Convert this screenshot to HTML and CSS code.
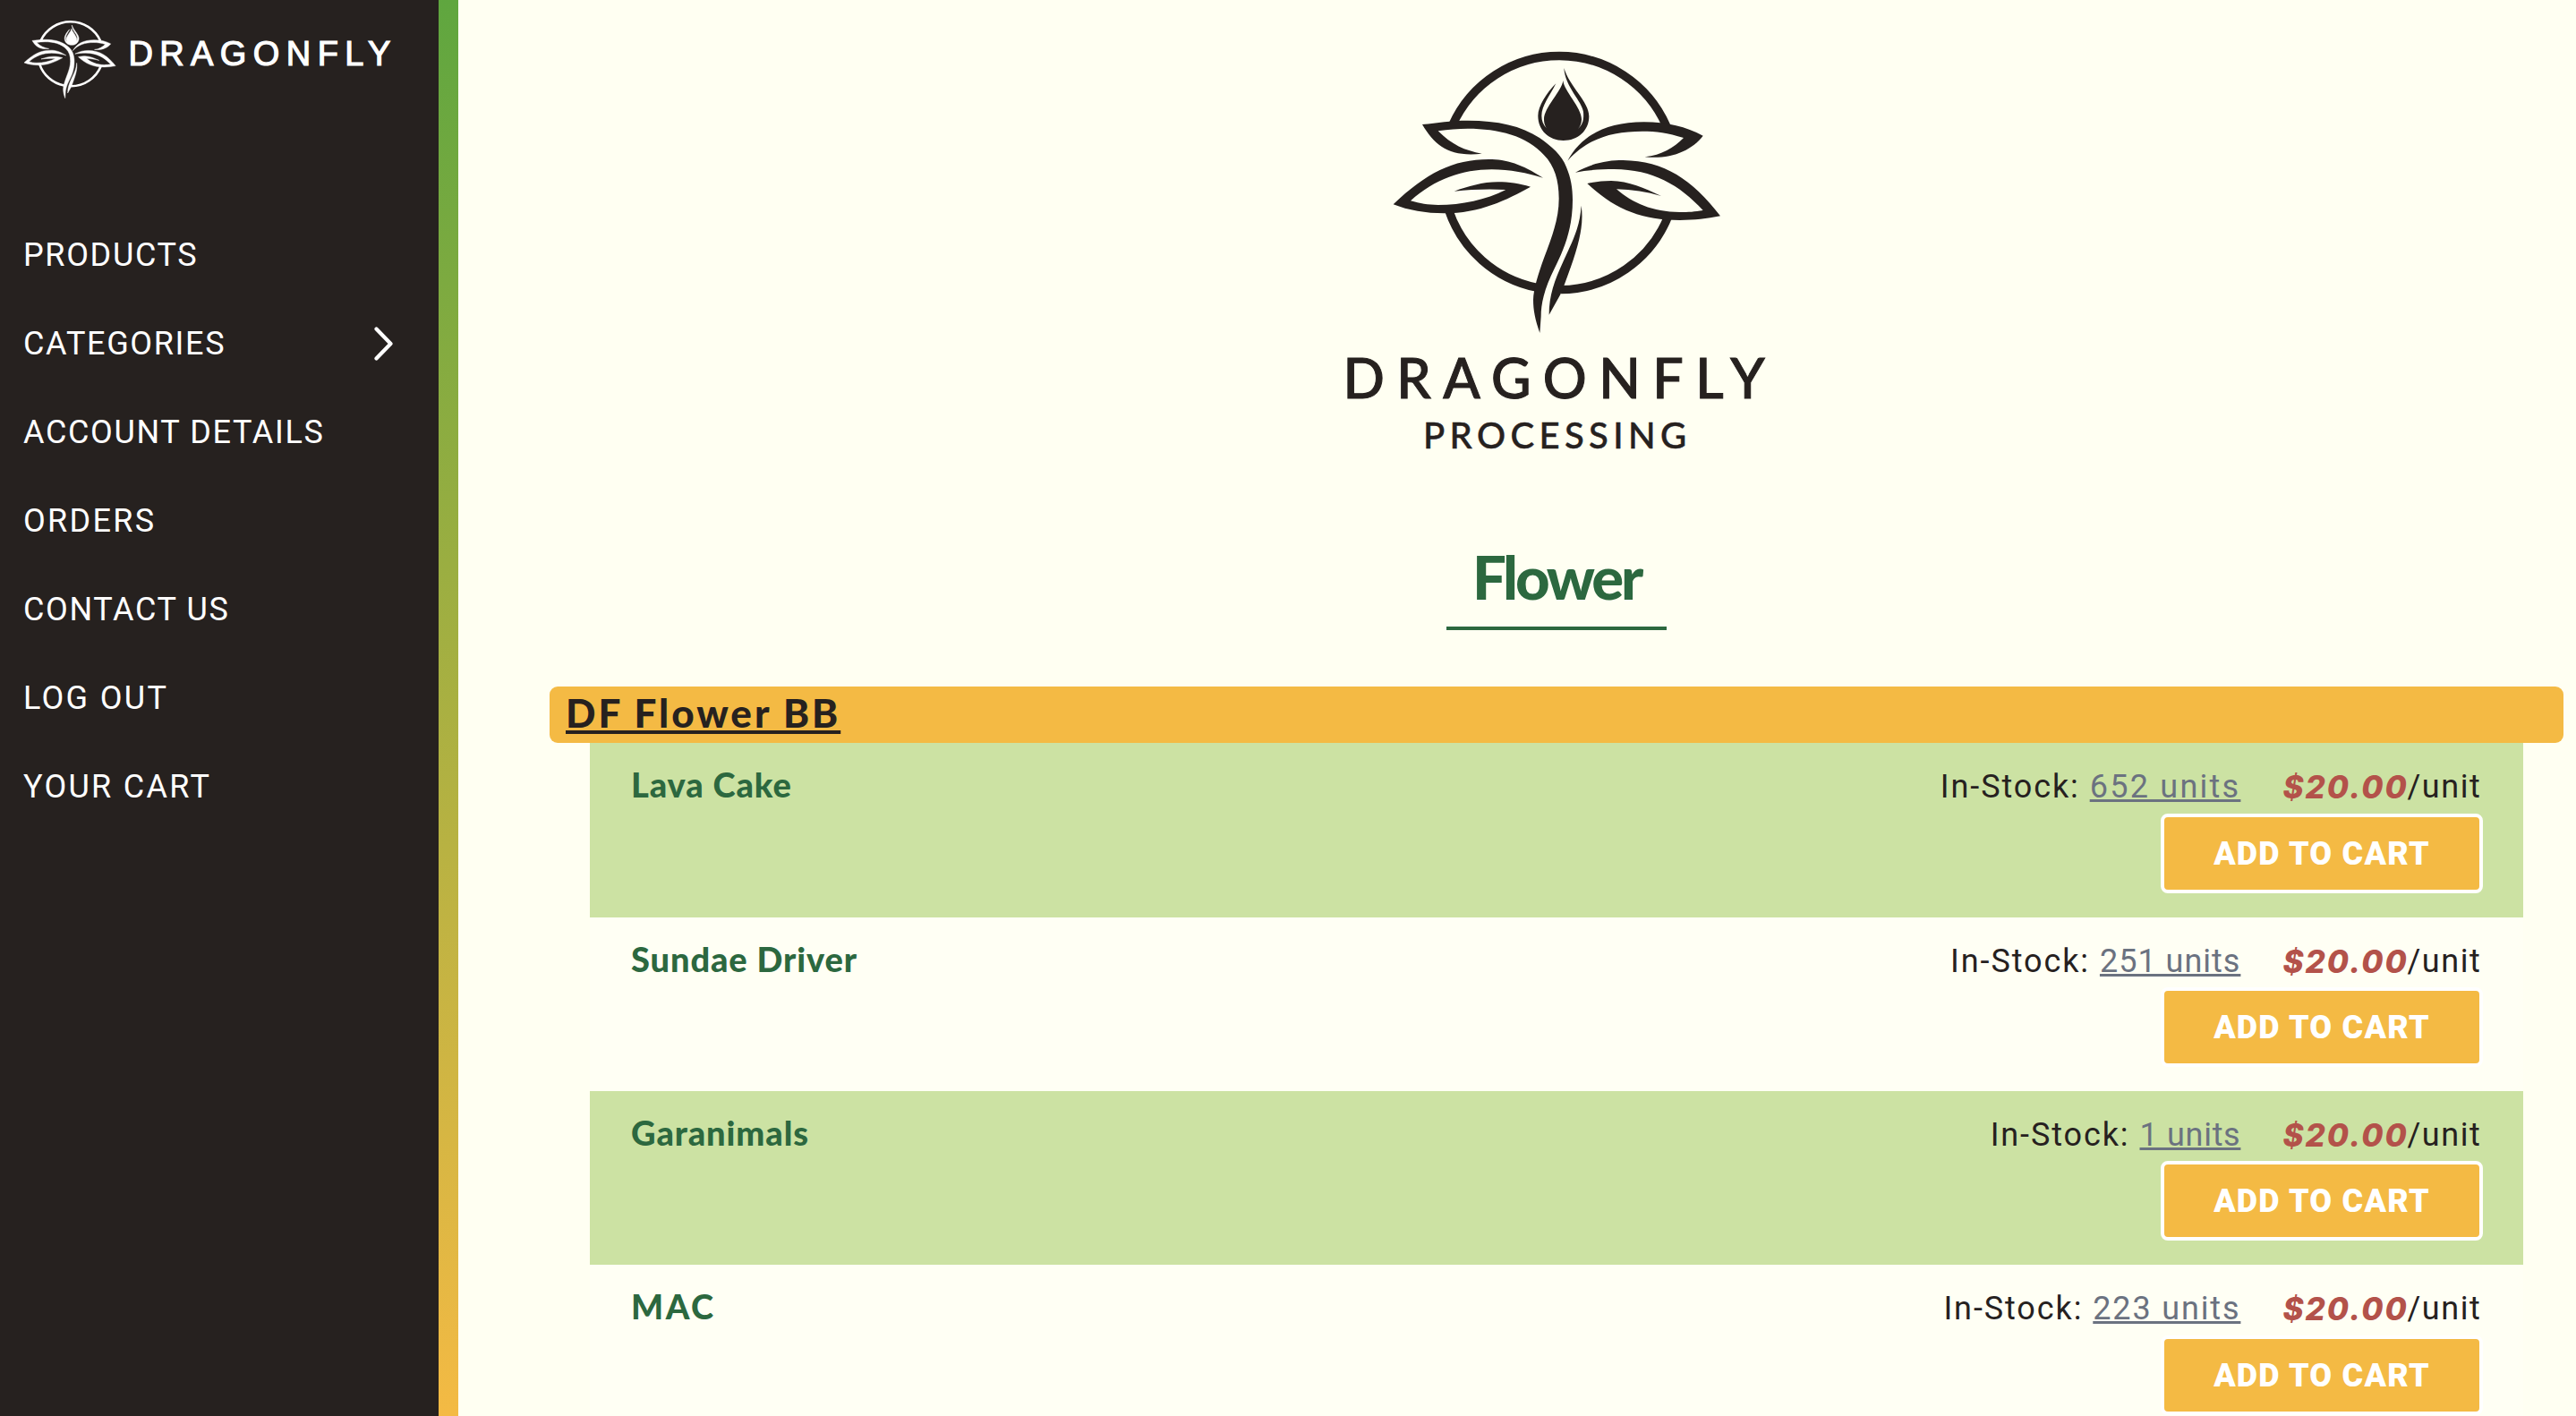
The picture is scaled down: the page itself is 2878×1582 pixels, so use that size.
FILE: index.html
```html
<!DOCTYPE html>
<html lang="en">
<head>
<meta charset="utf-8">
<title>Dragonfly Processing – Flower</title>
<link rel="stylesheet" href="styles.css">
</head>
<body>
<aside class="sidebar">
  <svg class="brand" viewBox="0 0 490 120" role="img" aria-label="Dragonfly">
    <g class="brand-mark" transform="translate(22.3 18.1) scale(.0932 .0919)"><use href="#mark"/></g>
    <text class="brand-name" x="143.4" y="73">DRAGONFLY</text>
  </svg>
  <nav class="menu">
    <a class="menu-item">PRODUCTS</a>
    <a class="menu-item">CATEGORIES
      <svg class="chevron" viewBox="0 0 22 38"><path d="M2.5 2.5 18.5 19 2.5 35.5"/></svg>
    </a>
    <a class="menu-item">ACCOUNT DETAILS</a>
    <a class="menu-item wide">ORDERS</a>
    <a class="menu-item">CONTACT US</a>
    <a class="menu-item wide">LOG OUT</a>
    <a class="menu-item wide">YOUR CART</a>
  </nav>
</aside>
<main class="content">
  <svg class="logo" viewBox="0 0 480 470" role="img" aria-label="Dragonfly Processing">
    <defs>
      <g id="mark">
        <g class="ring">
          <path d="M248 300A392 392 0 0 1 965 302"/>
          <path d="M236 585A392 392 0 0 0 528 843"/>
          <path d="M972 603A392 392 0 0 1 612 851"/>
        </g>
        <path d="M147 297C200 292 240 284 300 284C400 284 480 302 540 342C580 370 615 400 630 440C645 475 651 510 651 550C651 650 620 720 590 780C555 850 545 900 545 940L541 996C525 950 519 920 519 885C520 850 535 800 555 745C585 665 605 610 605 545C605 485 590 435 555 400C500 335 400 311 300 311C265 311 235 314 200 319C245 365 290 385 347 395C240 407 190 370 147 297Z"/>
        <path d="M680 569C690 640 670 710 622 838L610 867L572 935C572 870 590 820 620 755C655 680 675 640 680 569Z"/>
        <path d="M634 419C680 335 760 290 890 289C970 289 1030 305 1088 335C1050 385 980 415 893 406C950 400 990 375 1023 342C970 325 930 320 885 320C780 320 700 345 634 419Z"/>
        <path d="M552 476C480 430 430 414 370 414C250 414 160 460 50 565C100 585 160 595 220 595C340 595 430 550 510 506C470 495 440 490 400 490C350 490 300 505 254 521C310 515 370 512 427 516C360 550 280 567 200 567C165 567 140 562 108 553C190 480 280 448 380 448C440 448 500 460 552 476Z"/>
        <path d="M660 458C720 425 770 417 820 417C960 420 1050 480 1146 604C1100 613 1060 618 1010 618C880 618 790 580 700 495C730 489 750 486 780 486C840 487 890 510 948 537C900 523 850 516 798 514C850 560 920 591 1010 591C1040 591 1060 590 1088 585C1010 500 920 448 790 447C745 447 700 450 660 458Z"/>
        <path d="M619 150C622 185 681 240 681 280C681 295 676 305 669 312C686 296 689 280 687 255C683 220 625 170 622 108C640 170 706 220 706 270C706 318 668 351 620 351C572 351 535 318 535 268C535 235 565 190 595 160C575 200 547 235 547 268C547 285 552 298 563 309C557 300 555 290 555 280C555 240 615 185 619 150Z"/>
      </g>
    </defs>
    <g class="logo-mark" transform="translate(41 0) scale(.33333)"><use href="#mark"/></g>
    <text class="logo-name" x="1.5" y="405">DRAGONFLY</text>
    <text class="logo-sub" x="91" y="461">PROCESSING</text>
  </svg>
  <h1 class="title">Flower</h1>
  <section class="group">
    <h2 class="group-title"><a>DF Flower BB</a></h2>
    <div class="rows">
      <article class="row">
        <h3 class="name">Lava Cake</h3>
        <div class="buy">
          <div class="stock"><span>In-Stock:</span><a class="units">652 units</a><em class="price">$20.00</em><span class="per">/unit</span></div>
          <button class="add">ADD TO CART</button>
        </div>
      </article>
      <article class="row">
        <h3 class="name">Sundae Driver</h3>
        <div class="buy">
          <div class="stock"><span>In-Stock:</span><a class="units narrow">251 units</a><em class="price">$20.00</em><span class="per">/unit</span></div>
          <button class="add">ADD TO CART</button>
        </div>
      </article>
      <article class="row">
        <h3 class="name">Garanimals</h3>
        <div class="buy">
          <div class="stock"><span>In-Stock:</span><a class="units narrower">1 units</a><em class="price">$20.00</em><span class="per">/unit</span></div>
          <button class="add">ADD TO CART</button>
        </div>
      </article>
      <article class="row">
        <h3 class="name">MAC</h3>
        <div class="buy">
          <div class="stock"><span>In-Stock:</span><a class="units medium">223 units</a><em class="price">$20.00</em><span class="per">/unit</span></div>
          <button class="add">ADD TO CART</button>
        </div>
      </article>
    </div>
  </section>
</main>
</body>
</html>
```
FILE: styles.css
```css
:root {
  --ink: #26211f;
  --cream: #fffff2;
  --green: #2c683f;
  --amber: #f4ba44;
}
* { box-sizing: border-box; }
body {
  margin: 0;
  height: 1582px;
  overflow: hidden;
  display: grid;
  grid-template-columns: 512px 1fr;
  background: var(--cream);
  color: var(--ink);
  font: 36px/42px Roboto, sans-serif;
}
h1, h2, h3 { margin: 0; font-family: Lato, sans-serif; }

.sidebar {
  height: 1582px;
  border-right: 22px solid;
  border-image: linear-gradient(#5fa63f, #f4ba44) 1;
  background: var(--ink);
  background-clip: padding-box;
}
.brand { display: block; width: 490px; height: 120px; }
.brand-mark { color: #fff; fill: #fff; stroke: #fff; stroke-width: 5; }
.brand-name {
  font: 38px "Liberation Sans", sans-serif;
  letter-spacing: 7.41px;
  fill: #fff;
  stroke: #fff;
  stroke-width: 1.2;
}
.ring { fill: none; stroke: currentColor; stroke-width: 28; }
.menu { padding-top: 115px; }
.menu-item {
  display: flex;
  justify-content: space-between;
  align-items: center;
  height: 99px;
  padding: 0 50px 0 26px;
  color: #fff;
  letter-spacing: 1.65px;
}
.menu-item.wide { letter-spacing: 2.3px; }
.chevron {
  width: 22px;
  height: 38px;
  fill: none;
  stroke: #fff;
  stroke-width: 4.2;
  stroke-linecap: round;
  stroke-linejoin: round;
}

.content { height: 1582px; overflow: hidden; padding: 40px 14px 0 102px; }
.logo { display: block; width: 480px; height: 470px; margin: 0 auto; overflow: visible; fill: var(--ink); }
.logo-name, .logo-sub { font-family: Lato, sans-serif; font-weight: 500; stroke: var(--ink); }
.logo-name { font-size: 61px; letter-spacing: 13.4px; stroke-width: 1; }
.logo-sub { font-size: 40px; letter-spacing: 5.4px; stroke-width: .5; }
.title {
  width: 246px;
  margin: 94px auto 63px;
  padding-bottom: 16px;
  border-bottom: 4px solid var(--green);
  color: var(--green);
  font-size: 67px;
  line-height: 80px;
  font-weight: 900;
  letter-spacing: -3.2px;
  text-align: center;
}

.group-title {
  height: 63px;
  padding: 2px 18px 0;
  border-radius: 9px;
  background: var(--amber);
  font-size: 44px;
  line-height: 54px;
  font-weight: 900;
  letter-spacing: 2.95px;
}
.group-title a {
  text-decoration: underline 4px;
  text-underline-offset: 3px;
  text-decoration-skip-ink: none;
}
.rows { padding: 0 45px; }
.row {
  display: flex;
  justify-content: space-between;
  height: 194px;
  padding: 0 45px 0 46px;
  background: #fffff4;
}
.row:first-child { height: 195px; }
.row:nth-child(odd) { background: #cce2a3; }
.name {
  padding-top: 23px;
  color: var(--green);
  font-size: 38px;
  line-height: 46px;
  font-weight: 900;
  letter-spacing: .9px;
}
.row:nth-child(4) .name { letter-spacing: 2.5px; }
.buy { display: flex; flex-direction: column; align-items: flex-end; padding-top: 28px; }
.stock { display: flex; padding-right: 1px; letter-spacing: 1.9px; }
.units {
  margin: 0 47px 0 11px;
  color: #6b7280;
  letter-spacing: 2.25px;
  text-decoration: underline 3px;
  text-underline-offset: 2px;
  text-decoration-skip-ink: none;
}
.units.medium { letter-spacing: 1.85px; }
.units.narrow { letter-spacing: 1px; }
.units.narrower { letter-spacing: .7px; }
.price {
  width: 139px;
  color: #b3524a;
  font: italic 800 35px/42px Inter, sans-serif;
  letter-spacing: 2px;
}
.per { width: 83.6px; letter-spacing: 1.55px; }
.add {
  width: 360px;
  height: 89px;
  margin-top: 9px;
  padding: 0;
  border: 4px solid #fff;
  border-radius: 8px;
  background: var(--amber);
  color: #fff;
  font: 900 36px/42px Roboto, sans-serif;
  letter-spacing: 1.2px;
}
.row:nth-child(2) .add, .row:nth-child(3) .add { margin-top: 8px; }
```
